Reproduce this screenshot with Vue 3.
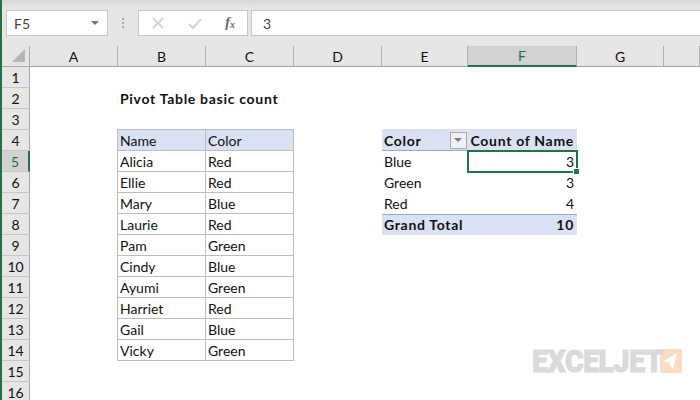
<script setup>
const columns = [
  { label: "A" },
  { label: "B" },
  { label: "C" },
  { label: "D" },
  { label: "E" },
  { label: "F", active: true },
  { label: "G" },
  { label: "" }
];

// only the filled cells, keyed by row and column
const cells = {
  "2-B": { text: "Pivot Table basic count", cls: "bold" },
  "4-B": { text: "Name", cls: "head boxed first" },
  "4-C": { text: "Color", cls: "head boxed" },
  "5-B": { text: "Alicia", cls: "boxed first" },
  "5-C": { text: "Red", cls: "boxed" },
  "6-B": { text: "Ellie", cls: "boxed first" },
  "6-C": { text: "Red", cls: "boxed" },
  "7-B": { text: "Mary", cls: "boxed first" },
  "7-C": { text: "Blue", cls: "boxed" },
  "8-B": { text: "Laurie", cls: "boxed first" },
  "8-C": { text: "Red", cls: "boxed" },
  "9-B": { text: "Pam", cls: "boxed first" },
  "9-C": { text: "Green", cls: "boxed" },
  "10-B": { text: "Cindy", cls: "boxed first" },
  "10-C": { text: "Blue", cls: "boxed" },
  "11-B": { text: "Ayumi", cls: "boxed first" },
  "11-C": { text: "Green", cls: "boxed" },
  "12-B": { text: "Harriet", cls: "boxed first" },
  "12-C": { text: "Red", cls: "boxed" },
  "13-B": { text: "Gail", cls: "boxed first" },
  "13-C": { text: "Blue", cls: "boxed" },
  "14-B": { text: "Vicky", cls: "boxed first" },
  "14-C": { text: "Green", cls: "boxed" },
  "4-E": { text: "Color", cls: "bold pivot-head filter" },
  "4-F": { text: "Count of Name", cls: "bold pivot-head num" },
  "5-E": { text: "Blue" },
  "5-F": { text: "3", cls: "num selected" },
  "6-E": { text: "Green" },
  "6-F": { text: "3", cls: "num" },
  "7-E": { text: "Red" },
  "7-F": { text: "4", cls: "num" },
  "8-E": { text: "Grand Total", cls: "bold pivot-total" },
  "8-F": { text: "10", cls: "bold pivot-total num" }
};

const rows = Array.from({ length: 16 }, (_, i) => i + 1);

function cellAt(row, col) {
  return cells[row + "-" + col] || { text: "" };
}
</script>

<template>
  <div class="excel">
    <div class="formula-area">
      <div class="name-box">
        <span>F5</span>
        <i class="caret"></i>
      </div>
      <div class="dots"><i></i><i></i><i></i></div>
      <div class="fx-box">
        <svg width="14" height="14" viewBox="0 0 14 14">
          <path d="M2 2 L12 12 M12 2 L2 12" stroke="#d4d4d4" stroke-width="1.8" fill="none" />
        </svg>
        <svg width="14" height="14" viewBox="0 0 14 14">
          <path d="M1 8 L5 12 L13 3" stroke="#d4d4d4" stroke-width="2" fill="none" />
        </svg>
        <span class="fx">f<sub>x</sub></span>
      </div>
      <div class="formula-input">3</div>
    </div>

    <div class="sheet">
      <div class="corner"><i></i></div>
      <div
        v-for="col in columns"
        :key="col.label"
        class="col-head"
        :class="{ active: col.active }"
      >{{ col.label }}</div>

      <template v-for="row in rows" :key="row">
        <div class="row-head" :class="{ active: row === 5 }">{{ row }}</div>
        <div
          v-for="col in columns"
          :key="col.label"
          class="cell"
          :class="cellAt(row, col.label).cls"
        >
          <span>{{ cellAt(row, col.label).text }}</span>
          <i v-if="cellAt(row, col.label).cls?.includes('filter')" class="filter-btn"></i>
        </div>
      </template>
    </div>

    <div class="logo">
      <span class="logo-text">EXCELJET</span>
      <svg width="22" height="24" viewBox="0 0 22 24">
        <rect width="22" height="24" fill="#fbdcc4" />
        <path d="M2.3 12.7 L16.7 4.3 L13 20.3 L8.3 13.3 Z" fill="#fff" />
      </svg>
    </div>
  </div>
</template>

<style>
html, body {
  margin: 0;
  background: #fff;
}
</style>

<style scoped>
.excel {
  position: relative;
  width: 700px;
  height: 400px;
  overflow: hidden;
  background: #fff;
  font-family: Lato, "Liberation Sans", sans-serif;
  font-size: 14px;
  color: #111;
  box-sizing: border-box;
  border-left: 2px solid #217346;
}
.formula-area {
  height: 46px;
  box-sizing: border-box;
  padding: 10px 0 10px 4px;
  display: flex;
  background: linear-gradient(#d8d8d8 0, #e6e6e6 8px);
  color: #444;
}
.name-box {
  width: 102px;
  box-sizing: border-box;
  border: 1px solid #c6c6c6;
  background: #fff;
  display: flex;
  align-items: center;
  justify-content: space-between;
  padding: 0 8px 0 7px;
}
.caret {
  border-left: 4px solid transparent;
  border-right: 4px solid transparent;
  border-top: 4px solid #777;
}
.dots {
  width: 30px;
  display: flex;
  flex-direction: column;
  align-items: center;
  justify-content: center;
  gap: 2px;
}
.dots i {
  width: 2px;
  height: 2px;
  background: #aaa;
}
.fx-box {
  width: 110px;
  box-sizing: border-box;
  border: 1px solid #c6c6c6;
  background: #fff;
  display: flex;
  align-items: center;
  justify-content: space-between;
  padding: 0 12px;
}
.fx {
  font-family: "Liberation Serif", serif;
  font-style: italic;
  font-weight: bold;
  font-size: 14px;
  color: #666;
}
.fx sub {
  font-size: 10px;
  vertical-align: -1px;
}
.formula-input {
  flex: 1;
  margin-left: 3px;
  border: 1px solid #c6c6c6;
  border-right: 0;
  background: #fff;
  display: flex;
  align-items: center;
  padding-left: 11px;
}
.sheet {
  display: grid;
  grid-template-columns: 28px 88px 88px 88px 88px 86px 109px 87px 36px;
  grid-template-rows: 21px repeat(16, 21px);
  background: #fff;
}
.corner {
  background: #e6e6e6;
  border-right: 1px solid #a8a8a8;
  border-bottom: 1px solid #a8a8a8;
  box-sizing: border-box;
  position: relative;
}
.corner i {
  position: absolute;
  right: 4px;
  bottom: 4px;
  border-left: 13px solid transparent;
  border-bottom: 13px solid #b5b5b5;
}
.col-head {
  background: #e6e6e6;
  border-right: 1px solid #b0b0b0;
  border-bottom: 1px solid #a0a0a0;
  box-sizing: border-box;
  display: flex;
  align-items: center;
  justify-content: center;
}
.col-head.active {
  background: #d2d2d2;
  color: #217346;
  border-bottom: 2px solid #217346;
}
.row-head {
  background: #e6e6e6;
  border-right: 1px solid #a8a8a8;
  border-bottom: 1px solid #c6c6c6;
  box-sizing: border-box;
  display: flex;
  align-items: center;
  justify-content: center;
  padding-top: 1px;
}
.row-head.active {
  background: #d2d2d2;
  color: #217346;
  border-right: 2px solid #217346;
}
.cell {
  position: relative;
  box-sizing: border-box;
  display: flex;
  align-items: center;
  padding: 0 3px 0 2px;
  white-space: nowrap;
}
.bold {
  font-weight: 700;
  font-size: 14px;
  letter-spacing: 0.7px;
  padding-bottom: 1px;
}
.boxed {
  border-right: 1px solid #bdbdbd;
  border-bottom: 1px solid #bdbdbd;
}
.first {
  box-shadow: -1px 0 0 #bdbdbd;
}
.head {
  background: #d9e1f2;
  box-shadow: 0 -1px 0 #bdbdbd;
}
.head.first {
  box-shadow: 0 -1px 0 #bdbdbd, -1px 0 0 #bdbdbd, -1px -1px 0 #bdbdbd;
}
.pivot-head {
  background: #d9e1f2;
  box-shadow: inset 0 -1px 0 #8ea9db, 0 -1px 0 #d9e1f2;
}
.pivot-total {
  background: #d9e1f2;
  box-shadow: inset 0 1px 0 #8ea9db;
}
.num {
  justify-content: flex-end;
}
.filter-btn {
  position: absolute;
  right: 1px;
  top: 2px;
  width: 17px;
  height: 17px;
  box-sizing: border-box;
  border: 1px solid #aaa;
  background: #f0f0f0;
}
.filter-btn::after {
  content: "";
  position: absolute;
  left: 3px;
  top: 5px;
  border-left: 4px solid transparent;
  border-right: 4px solid transparent;
  border-top: 4px solid #777;
}
.selected {
  outline: 2px solid #217346;
  outline-offset: -1px;
}
.selected::after {
  content: "";
  position: absolute;
  right: -3px;
  bottom: -3px;
  width: 5px;
  height: 5px;
  background: #217346;
  border: 1px solid #fff;
}
.logo {
  position: absolute;
  left: 530px;
  top: 349px;
  display: flex;
  gap: 1px;
  align-items: flex-start;
}
.logo-text {
  display: block;
  width: 127px;
  font-family: Roboto, "Liberation Sans", sans-serif;
  font-weight: 900;
  font-size: 32px;
  line-height: 24px;
  letter-spacing: -0.5px;
  white-space: nowrap;
  color: #d9dadb;
  -webkit-text-stroke: 1px #d9dadb;
  transform: scaleX(0.89);
  transform-origin: left center;
}
</style>
